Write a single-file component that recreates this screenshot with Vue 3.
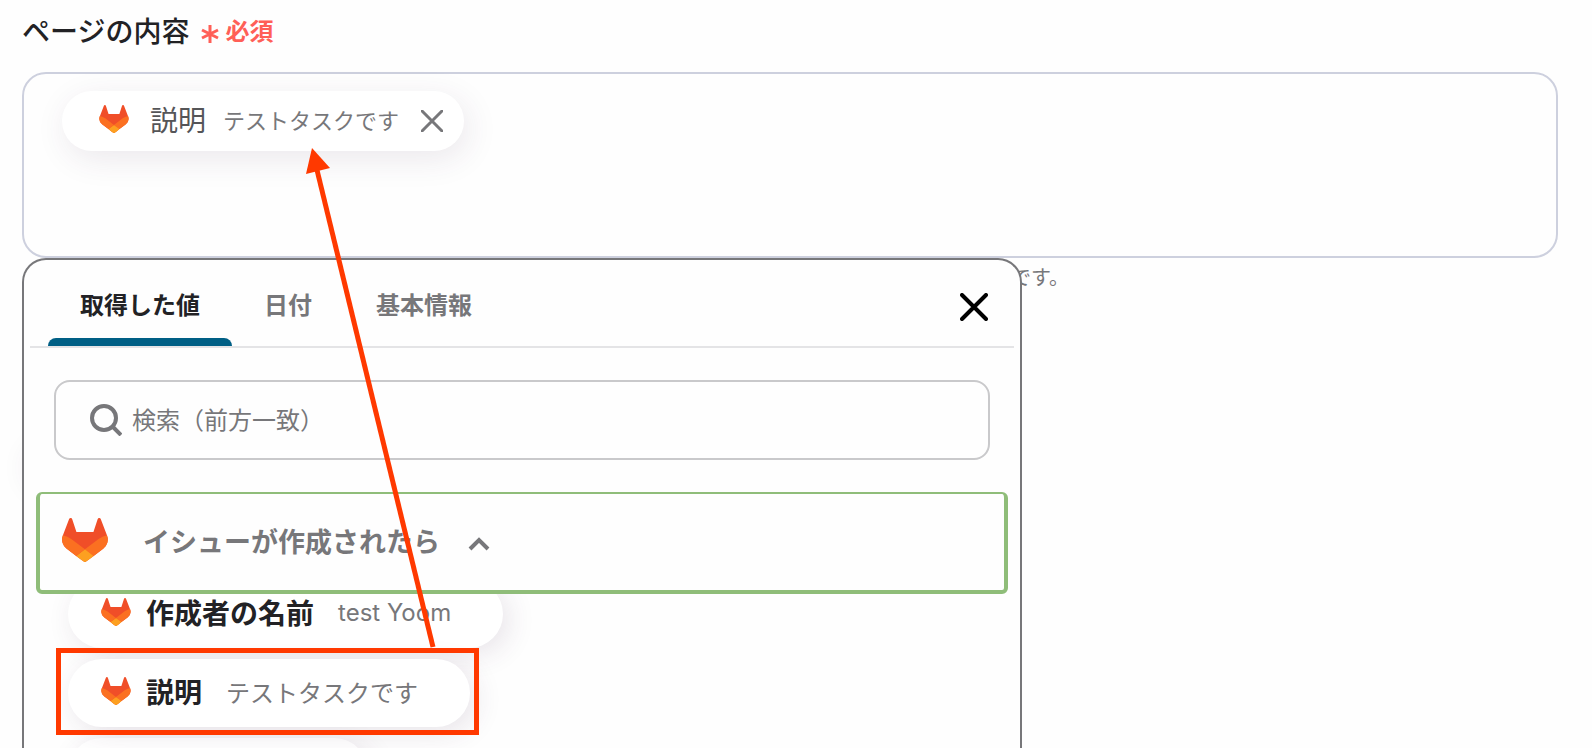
<template>
  <main class="page">
    <svg class="sprite" aria-hidden="true">
      <symbol id="gitlab" viewBox="0 0 25 24">
        <path fill="#f04e28" d="m24.507 9.5-.034-.09L21.082.562a.896.896 0 0 0-1.694.091l-2.29 7.01H7.825L5.535.653a.898.898 0 0 0-1.694-.09L.451 9.411.416 9.5a6.297 6.297 0 0 0 2.09 7.278l.012.01.03.022 5.16 3.867 2.56 1.935 1.554 1.176a1.051 1.051 0 0 0 1.268 0l1.555-1.176 2.56-1.935 5.197-3.89.014-.01A6.297 6.297 0 0 0 24.507 9.5Z" />
        <path fill="#fb7021" d="m24.507 9.5-.034-.09a11.44 11.44 0 0 0-4.56 2.051l-7.447 5.632 4.742 3.584 5.197-3.89.014-.01A6.297 6.297 0 0 0 24.507 9.5Z" />
        <path fill="#fda020" d="m7.707 20.677 2.56 1.935 1.555 1.176a1.051 1.051 0 0 0 1.268 0l1.555-1.176 2.56-1.935-4.743-3.584-4.755 3.584Z" />
        <path fill="#fb7021" d="M5.01 11.461a11.43 11.43 0 0 0-4.56-2.05L.416 9.5a6.297 6.297 0 0 0 2.09 7.278l.012.01.03.022 5.16 3.867 4.745-3.584-7.444-5.632Z" />
      </symbol>
    </svg>

    <div class="field-header">
      <h1 id="content-label">ページの内容</h1>
      <span class="required">
        <svg class="asterisk" viewBox="0 0 18 18" aria-hidden="true">
          <path d="M9 0v18M1 5l16 8M17 5L1 13" />
        </svg>
        必須
      </span>
    </div>

    <div class="editor" role="textbox" aria-multiline="true" aria-labelledby="content-label">
      <div class="chip">
        <svg class="logo"><use href="#gitlab" /></svg>
        <span class="chip-name">説明</span>
        <span class="chip-value">テストタスクです</span>
        <button class="chip-remove" type="button" aria-label="削除">
          <svg viewBox="0 0 22 22"><path d="M1 1l20 20M21 1L1 21" /></svg>
        </button>
      </div>
    </div>

    <div class="below">
      <p class="helper">です。</p>

      <section class="picker">
        <div class="tabs-row">
          <div class="tabs" role="tablist">
            <button
              v-for="tab in tabs"
              :key="tab"
              type="button"
              role="tab"
              class="tab"
              :class="{ active: tab === activeTab }"
              :aria-selected="tab === activeTab"
              @click="activeTab = tab"
            >{{ tab }}</button>
          </div>
          <button class="close-btn" type="button" aria-label="閉じる">
            <svg viewBox="0 0 28 28"><path d="M2 2l24 24M26 2L2 26" /></svg>
          </button>
        </div>

        <label class="search">
          <svg viewBox="0 0 32 32" aria-hidden="true">
            <circle cx="14" cy="14" r="12" />
            <path d="M22 22L31 31" />
          </svg>
          <input v-model="query" type="text" placeholder="検索（前方一致）" aria-label="検索">
        </label>

        <button class="group" type="button" aria-expanded="true">
          <svg class="logo large"><use href="#gitlab" /></svg>
          <span>イシューが作成されたら</span>
          <svg class="chevron" viewBox="0 0 22 14"><path d="M2 12l9-9 9 9" /></svg>
        </button>

        <ul class="items">
          <li v-for="item in items" :key="item.name" :class="{ marked: item.marked }">
            <button class="pill" type="button">
              <svg class="logo"><use href="#gitlab" /></svg>
              <span class="pill-name">{{ item.name }}</span>
              <span class="pill-value">{{ item.value }}</span>
            </button>
          </li>
          <li><div class="pill next"></div></li>
        </ul>
      </section>
    </div>

    <!-- flèche : de la valeur choisie vers le champ -->
    <svg class="arrow" viewBox="0 0 130 500" aria-hidden="true">
      <path class="line" d="M11 22L127 499" />
      <path class="head" d="M6 0L0 26L24 20Z" />
    </svg>
  </main>
</template>

<script setup>
import { ref } from 'vue'

const tabs = ['取得した値', '日付', '基本情報']
const activeTab = ref('取得した値')
const query = ref('')

const items = ref([
  { name: '作成者の名前', value: 'test Yoom', marked: false },
  { name: '説明', value: 'テストタスクです', marked: true }
])
</script>

<style>
body {
  background: #fefefe;
}
</style>

<style scoped>
.page {
  position: relative;
  display: flex;
  flex-direction: column;
  height: 100vh;
  padding: 10px 34px 0 22px;
  box-sizing: border-box;
  overflow: hidden;
  font-family: Inter, 'Noto Sans CJK JP', sans-serif;
  color: #222225;
}

button {
  font-family: inherit;
  background: none;
  border: none;
  padding: 0;
  cursor: pointer;
}

svg {
  flex: none;
}

.sprite {
  position: absolute;
  width: 0;
  height: 0;
}

.logo {
  width: 30px;
  height: 28px;
}

.logo.large {
  width: 46px;
  height: 44px;
}

/* titre du champ */
.field-header {
  display: flex;
  align-items: center;
  gap: 12px;
  height: 44px;
  margin-bottom: 18px;
}

.field-header h1 {
  margin: 0;
  font-size: 28px;
  font-weight: 500;
  line-height: 40px;
}

.required {
  display: flex;
  align-items: center;
  gap: 6px;
  color: #ff5f57;
  font-size: 24px;
  font-weight: 700;
  line-height: 40px;
}

.asterisk {
  width: 18px;
  height: 18px;
  margin-top: 4px;
}

.asterisk path {
  fill: none;
  stroke: #ff5f57;
  stroke-width: 3;
}

/* zone de saisie */
.editor {
  min-height: 186px;
  box-sizing: border-box;
  padding: 17px 38px;
  border: 2px solid #cdd0de;
  border-radius: 24px;
}

.chip {
  display: inline-flex;
  align-items: center;
  height: 60px;
  padding: 0 21px 4px 37px;
  box-sizing: border-box;
  border-radius: 30px;
  background: #fff;
  box-shadow: 4px 8px 32px rgba(70, 40, 80, 0.1);
  white-space: nowrap;
}

.chip-name {
  margin-left: 21px;
  font-size: 28px;
  color: #555558;
}

.chip-value {
  margin-left: 17px;
  font-size: 22px;
  color: #77777a;
}

.chip-remove {
  display: flex;
  margin: 4px 0 0 22px;
}

.chip-remove svg {
  width: 22px;
  height: 22px;
}

.chip-remove path {
  fill: none;
  stroke: #77777a;
  stroke-width: 3;
  stroke-linecap: round;
}

.below {
  position: relative;
  flex: 1;
}

.below::before {
  content: "";
  position: absolute;
  top: 190px;
  left: 8px;
  width: 60px;
  height: 40px;
  border-radius: 30px;
  box-shadow: 0 0 30px rgba(70, 40, 80, 0.12);
}

.helper {
  margin: 0;
  padding: 4px 0 0 989px;
  font-size: 20px;
  line-height: 32px;
  color: #77777a;
}

/* fenêtre de sélection */
.picker {
  position: absolute;
  top: 0;
  bottom: 0;
  left: 0;
  width: 1000px;
  max-width: 100%;
  box-sizing: border-box;
  border: 2px solid #77777a;
  border-bottom: none;
  border-radius: 24px 24px 0 0;
  background: #fefefe;
  overflow: hidden;
}

.tabs-row {
  display: flex;
  justify-content: space-between;
  height: 86px;
  margin: 0 6px;
  padding: 0 26px 0 18px;
  border-bottom: 2px solid #e4e4e6;
}

.tabs {
  display: flex;
}

.tab {
  position: relative;
  padding: 6px 32px 0;
  font-size: 24px;
  font-weight: 700;
  line-height: 32px;
  color: #77777a;
}

.tab.active {
  color: #222225;
}

.tab.active::after {
  content: "";
  position: absolute;
  left: 0;
  right: 0;
  bottom: 0;
  height: 8px;
  border-radius: 8px 8px 0 0;
  background: #005f85;
}

.close-btn {
  display: flex;
  align-items: center;
}

.close-btn svg {
  width: 28px;
  height: 28px;
  margin-top: 8px;
}

.close-btn path {
  fill: none;
  stroke: #000;
  stroke-width: 4;
  stroke-linecap: round;
}

.search {
  display: flex;
  align-items: center;
  gap: 10px;
  height: 80px;
  box-sizing: border-box;
  margin: 32px 30px;
  padding: 0 34px;
  border: 2px solid #c9c9cb;
  border-radius: 16px;
}

.search svg {
  width: 32px;
  height: 32px;
}

.search circle,
.search path {
  fill: none;
  stroke: #77777a;
  stroke-width: 4;
}

.search input {
  flex: 1;
  min-width: 0;
  padding: 2px 0 0;
  border: none;
  outline: none;
  background: none;
  font-family: inherit;
  font-size: 24px;
  line-height: 40px;
  color: #222225;
}

.search input::placeholder {
  color: #77777a;
  opacity: 1;
}

.group {
  position: relative;
  z-index: 1;
  display: flex;
  align-items: center;
  width: 972px;
  max-width: calc(100% - 24px);
  height: 102px;
  margin-left: 12px;
  padding: 0 22px 4px;
  box-sizing: border-box;
  border: 4px solid #8fbd79;
  border-top-width: 2px;
  border-radius: 6px;
  background: #fefefe;
  font-size: 27px;
  font-weight: 700;
  color: #77777a;
}

.group span {
  margin: 0 28px 0 35px;
}

.chevron {
  width: 22px;
  height: 14px;
  margin-top: 8px;
}

.chevron path {
  fill: none;
  stroke: #77777a;
  stroke-width: 4;
}

/* valeurs, la première passe sous l'en-tête du groupe */
.items {
  display: flex;
  flex-direction: column;
  align-items: flex-start;
  gap: 11px;
  margin: -14px 0 0;
  padding: 0 0 0 44px;
  list-style: none;
}

.pill {
  display: flex;
  align-items: center;
  height: 68px;
  padding: 0 52px 4px 33px;
  box-sizing: border-box;
  border-radius: 34px;
  background: #fff;
  box-shadow: 6px 6px 28px rgba(70, 40, 80, 0.12);
  white-space: nowrap;
}

.pill.next {
  width: 300px;
}

.pill-name {
  margin-left: 15px;
  font-size: 28px;
  font-weight: 700;
  color: #222225;
}

.pill-value {
  margin-left: 24px;
  font-size: 24px;
  color: #77777a;
}

.marked {
  position: relative;
}

.marked::after {
  content: "";
  position: absolute;
  inset: -11px -9px -8px -12px;
  border: 5px solid #ff3900;
  pointer-events: none;
}

.arrow {
  position: absolute;
  z-index: 2;
  top: 148px;
  left: 306px;
  width: 130px;
  height: 500px;
  pointer-events: none;
}

.arrow .line {
  fill: none;
  stroke: #ff3900;
  stroke-width: 5;
}

.arrow .head {
  fill: #ff3900;
}
</style>
